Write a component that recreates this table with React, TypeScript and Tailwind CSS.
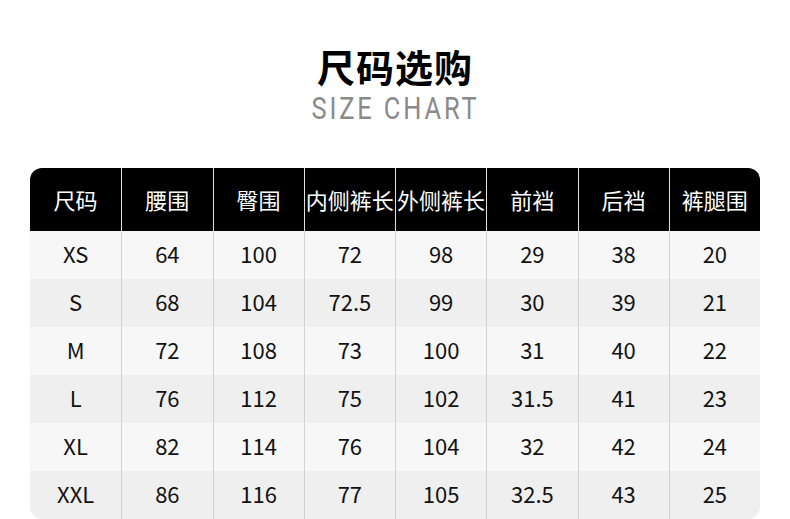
const headers = ['尺码', '腰围', '臀围', '内侧裤长', '外侧裤长', '前裆', '后裆', '裤腿围'];

const rows = [
  ['XS', '64', '100', '72', '98', '29', '38', '20'],
  ['S', '68', '104', '72.5', '99', '30', '39', '21'],
  ['M', '72', '108', '73', '100', '31', '40', '22'],
  ['L', '76', '112', '75', '102', '31.5', '41', '23'],
  ['XL', '82', '114', '76', '104', '32', '42', '24'],
  ['XXL', '86', '116', '77', '105', '32.5', '43', '25'],
];

const cjk = { fontFamily: '"Noto Sans CJK SC", "Noto Sans", sans-serif' };

export default function App() {
  return (
    <div className="w-[790px] h-[519px] bg-white overflow-hidden" style={cjk}>
      <div className="flex flex-col items-center pt-[42px]">
        <h1 className="text-[38px] leading-[48px] font-bold text-black tracking-[1px]">尺码选购</h1>
        <p
          className="text-[31px] leading-[34px] text-[#8a8a8a] tracking-[3.5px] mt-[2px] scale-x-[0.82]"
          style={{ fontFamily: 'Roboto, "Liberation Sans", sans-serif' }}
        >
          SIZE CHART
        </p>
      </div>

      <div className="mx-[30px] mt-[42px] rounded-[12px] overflow-hidden">
        <div className="grid grid-cols-8 h-[63px] bg-black">
          {headers.map((h, i) => (
            <div
              key={h}
              className={`flex items-center justify-center text-white text-[22px] whitespace-nowrap ${
                i > 0 ? 'border-l border-[#e0e0e0]' : ''
              }`}
            >
              {h}
            </div>
          ))}
        </div>
        {rows.map((r, ri) => (
          <div key={r[0]} className={`grid grid-cols-8 h-[48px] ${ri % 2 === 0 ? 'bg-[#f7f7f7]' : 'bg-[#efefef]'}`}>
            {r.map((c, ci) => (
              <div
                key={ci}
                className={`flex items-center justify-center pb-[3px] text-[22px] text-[#111] ${
                  ci > 0 ? 'border-l border-[#d2d2d2]' : ''
                }`}
              >
                {c}
              </div>
            ))}
          </div>
        ))}
      </div>
    </div>
  );
}
